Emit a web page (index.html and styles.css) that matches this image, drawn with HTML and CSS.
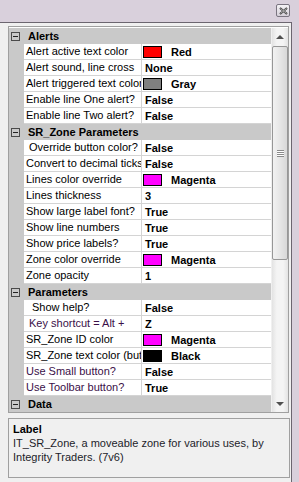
FILE: index.html
```html
<!DOCTYPE html>
<html lang="en">
<head>
    <meta charset="UTF-8">
    <title>Properties</title>
    <link rel="stylesheet" href="styles.css">
</head>
<body>
    <div class="window">
        <div class="titlebar">
            <button class="close-btn" title="Close">
                <svg width="9" height="8" viewBox="0 0 9 8">
                    <path d="M1 1 L8 7 M8 1 L1 7" stroke="#3a3a3a" stroke-width="2"/>
                    <path d="M1.5 1.5 L7.5 6.5 M7.5 1.5 L1.5 6.5" stroke="#fff" stroke-width="0.6"/>
                </svg>
            </button>
        </div>
        <div class="client">
            <div class="grid">
                <div class="rows">
                    <div class="cat"><span class="toggle"></span><span class="cat-name">Alerts</span></div>
                    <div class="prop"><span class="gutter"></span><span class="name">Alert active text color</span><span class="value"><i class="swatch red"></i>Red</span></div>
                    <div class="prop"><span class="gutter"></span><span class="name">Alert sound, line cross</span><span class="value plain">None</span></div>
                    <div class="prop"><span class="gutter"></span><span class="name">Alert triggered text color</span><span class="value"><i class="swatch gray"></i>Gray</span></div>
                    <div class="prop"><span class="gutter"></span><span class="name">Enable line One alert?</span><span class="value plain">False</span></div>
                    <div class="prop"><span class="gutter"></span><span class="name">Enable line Two alert?</span><span class="value plain">False</span></div>

                    <div class="cat"><span class="toggle"></span><span class="cat-name">SR_Zone Parameters</span></div>
                    <div class="prop"><span class="gutter"></span><span class="name indent">Override button color?</span><span class="value plain">False</span></div>
                    <div class="prop"><span class="gutter"></span><span class="name">Convert to decimal ticks?</span><span class="value plain">False</span></div>
                    <div class="prop"><span class="gutter"></span><span class="name">Lines color override</span><span class="value"><i class="swatch magenta"></i>Magenta</span></div>
                    <div class="prop"><span class="gutter"></span><span class="name">Lines thickness</span><span class="value plain">3</span></div>
                    <div class="prop"><span class="gutter"></span><span class="name">Show large label font?</span><span class="value plain">True</span></div>
                    <div class="prop"><span class="gutter"></span><span class="name">Show line numbers</span><span class="value plain">True</span></div>
                    <div class="prop"><span class="gutter"></span><span class="name">Show price labels?</span><span class="value plain">True</span></div>
                    <div class="prop"><span class="gutter"></span><span class="name">Zone color override</span><span class="value"><i class="swatch magenta"></i>Magenta</span></div>
                    <div class="prop"><span class="gutter"></span><span class="name">Zone opacity</span><span class="value plain">1</span></div>

                    <div class="cat"><span class="toggle"></span><span class="cat-name">Parameters</span></div>
                    <div class="prop"><span class="gutter"></span><span class="name indent-lg">Show help?</span><span class="value plain">False</span></div>
                    <div class="prop"><span class="gutter"></span><span class="name indent-sm purple">Key shortcut = Alt +</span><span class="value plain">Z</span></div>
                    <div class="prop"><span class="gutter"></span><span class="name">SR_Zone ID color</span><span class="value"><i class="swatch magenta"></i>Magenta</span></div>
                    <div class="prop"><span class="gutter"></span><span class="name">SR_Zone text color (button)</span><span class="value"><i class="swatch black"></i>Black</span></div>
                    <div class="prop"><span class="gutter"></span><span class="name purple">Use Small button?</span><span class="value plain">False</span></div>
                    <div class="prop"><span class="gutter"></span><span class="name purple">Use Toolbar button?</span><span class="value plain">True</span></div>

                    <div class="cat"><span class="toggle"></span><span class="cat-name">Data</span></div>
                </div>
                <div class="scrollbar">
                    <div class="sb-btn"><span class="arrow-up"></span></div>
                    <div class="sb-track">
                        <div class="sb-thumb"><span class="grip"></span></div>
                    </div>
                    <div class="sb-btn"><span class="arrow-down"></span></div>
                </div>
            </div>
            <div class="help">
                <div class="help-title">Label</div>
                <div class="help-text">IT_SR_Zone, a moveable zone for various uses, by<br>Integrity Traders. (7v6)</div>
            </div>
        </div>
    </div>
</body>
</html>
```

FILE: styles.css
```css
* {
    margin: 0;
    padding: 0;
    box-sizing: border-box;
}

body {
    width: 299px;
    height: 482px;
    overflow: hidden;
    font-family: "Liberation Sans", Arial, sans-serif;
    font-size: 11px;
    color: #000;
}

.window {
    width: 299px;
    height: 482px;
    background: #d9d0dc;
    display: flex;
    flex-direction: column;
}

/* полоса заголовка */
.titlebar {
    height: 22px;
    display: flex;
    justify-content: flex-end;
    align-items: flex-start;
    padding: 4px 9px 0 0;
}

.close-btn {
    width: 14px;
    height: 13px;
    border: 1px solid #7a7480;
    border-radius: 2px;
    background: linear-gradient(#f4f2f5, #d6d0d9);
    display: flex;
    align-items: center;
    justify-content: center;
}

.client {
    width: 292px;
    flex: 1;
    background: #f0f0f0;
    border-top: 1px solid #6c6670;
    border-right: 1px solid #6c6670;
    padding: 3px 0 0 8px;
}

.grid {
    width: 281px;
    height: 387px;
    border: 1px solid #a0a0a0;
    padding-top: 1px;
    display: flex;
    background: #fff;
}

.rows {
    width: 263px;
    display: flex;
    flex-direction: column;
}

.cat {
    height: 16px;
    background: #c9c9c9;
    display: flex;
    align-items: center;
}

.toggle {
    width: 9px;
    height: 9px;
    margin: 0 6px 0 2px;
    border: 1px solid #4a4a4a;
    position: relative;
}

.toggle::after {
    content: "";
    position: absolute;
    left: 1px;
    top: 3px;
    width: 5px;
    height: 1px;
    background: #222;
}

.cat-name {
    font-weight: bold;
    padding-left: 2px;
}

.prop {
    height: 16px;
    display: flex;
}

.gutter {
    width: 15px;
    background: #c9c9c9;
}

.name {
    width: 118px;
    padding-left: 2px;
    line-height: 15px;
    white-space: nowrap;
    overflow: hidden;
    border-right: 1px solid #d4d4d4;
    border-bottom: 1px solid #d4d4d4;
}

.name.indent { padding-left: 5px; }
.name.indent-sm { padding-left: 5px; }
.name.indent-lg { padding-left: 8px; }
.name.purple { color: #3a0f48; }

.value {
    flex: 1;
    display: flex;
    align-items: center;
    padding-left: 1px;
    font-weight: bold;
    border-bottom: 1px solid #d4d4d4;
    white-space: nowrap;
    overflow: hidden;
}

.value.plain {
    padding-left: 3px;
}

.swatch {
    width: 19px;
    height: 12px;
    border: 1px solid #000;
    margin-right: 9px;
}

.swatch.red { background: #ff0000; }
.swatch.gray { background: #808080; }
.swatch.magenta { background: #ff00ff; }
.swatch.black { background: #000; }

/* полоса прокрутки */
.scrollbar {
    width: 17px;
    display: flex;
    flex-direction: column;
    background: linear-gradient(90deg, #e3e3e3, #f4f4f4 30%, #f4f4f4 70%, #e3e3e3);
    border-left: 1px solid #f0f0f0;
}

.sb-btn {
    height: 17px;
    display: flex;
    align-items: center;
    justify-content: center;
}

.arrow-up,
.arrow-down {
    width: 0;
    height: 0;
    border-left: 4px solid transparent;
    border-right: 4px solid transparent;
}

.arrow-up { border-bottom: 4px solid #505050; }
.arrow-down { border-top: 4px solid #505050; }

.sb-track {
    flex: 1;
}

.sb-thumb {
    margin: 1px 0 0 0;
    height: 214px;
    border: 1px solid #979797;
    border-radius: 2px;
    background: linear-gradient(90deg, #f2f2f2, #e6e6e6 50%, #d8d8d8);
    display: flex;
    align-items: center;
    justify-content: center;
}

.grip {
    width: 7px;
    height: 7px;
    border-top: 1px solid #8a8a8a;
    border-bottom: 1px solid #8a8a8a;
    background: linear-gradient(#fff 0 1px, #8a8a8a 1px 2px, #fff 2px 3px, #8a8a8a 3px 4px, #fff 4px);
}

/* панель описания */
.help {
    width: 282px;
    height: 60px;
    margin-top: 5px;
    border: 1px solid #a0a0a0;
    padding: 3px 4px;
    color: #1c1c2a;
}

.help-title {
    font-weight: bold;
    line-height: 14px;
    color: #000;
}

.help-text {
    line-height: 14px;
    white-space: nowrap;
}
```
